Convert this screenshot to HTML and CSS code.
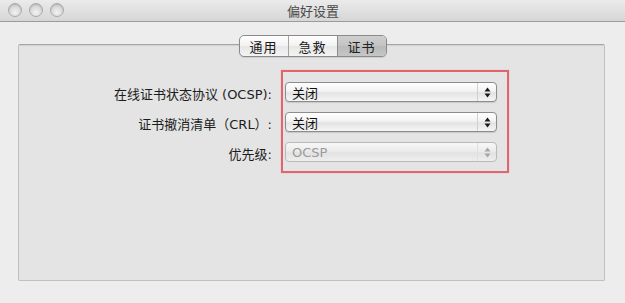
FILE: index.html
```html
<!DOCTYPE html>
<html lang="zh-CN">
<head>
<meta charset="utf-8">
<title>偏好设置</title>
<link rel="stylesheet" href="styles.css">
</head>
<body>
<div class="window">
  <div class="titlebar">
    <div class="lights">
      <span class="light"></span>
      <span class="light"></span>
      <span class="light"></span>
    </div>
    <div class="title">偏好设置</div>
  </div>
  <div class="content">
    <div class="tabs-row">
      <div class="segmented">
        <div class="seg">通用</div>
        <div class="seg">急救</div>
        <div class="seg selected">证书</div>
      </div>
    </div>
    <div class="groupbox">
      <div class="form">
        <div class="labels">
          <div class="label">在线证书状态协议 (OCSP):</div>
          <div class="label">证书撤消清单（CRL）:</div>
          <div class="label">优先级:</div>
        </div>
        <div class="highlight">
          <div class="popup">
            <span class="popup-text">关闭</span>
            <span class="popup-arrows"><svg width="7" height="11" viewBox="0 0 7 11"><path d="M3.5 0.5 L6.5 4.5 L0.5 4.5 Z" /><path d="M0.5 6.5 L6.5 6.5 L3.5 10.5 Z" /></svg></span>
          </div>
          <div class="popup">
            <span class="popup-text">关闭</span>
            <span class="popup-arrows"><svg width="7" height="11" viewBox="0 0 7 11"><path d="M3.5 0.5 L6.5 4.5 L0.5 4.5 Z" /><path d="M0.5 6.5 L6.5 6.5 L3.5 10.5 Z" /></svg></span>
          </div>
          <div class="popup disabled">
            <span class="popup-text">OCSP</span>
            <span class="popup-arrows"><svg width="7" height="11" viewBox="0 0 7 11"><path d="M3.5 0.5 L6.5 4.5 L0.5 4.5 Z" /><path d="M0.5 6.5 L6.5 6.5 L3.5 10.5 Z" /></svg></span>
          </div>
        </div>
      </div>
    </div>
  </div>
</div>
</body>
</html>
```

FILE: styles.css
```css
* { box-sizing: border-box; }
html, body {
  margin: 0;
  padding: 0;
  width: 625px;
  height: 303px;
  overflow: hidden;
  background: #ededed;
  font-family: "DejaVu Sans", "Noto Sans CJK SC", sans-serif;
  font-size: 13px;
  color: #1a1a1a;
}
.window {
  width: 625px;
  height: 303px;
  display: flex;
  flex-direction: column;
  background: #ededed;
}
.titlebar {
  height: 22px;
  flex: none;
  display: flex;
  align-items: center;
  position: relative;
  background: linear-gradient(#ebebeb, #d6d6d6);
  border-bottom: 1px solid #9c9c9c;
}
.lights {
  display: flex;
  gap: 7px;
  padding-left: 8px;
  padding-bottom: 1px;
}
.light {
  width: 14px;
  height: 14px;
  border-radius: 50%;
  border: 1px solid #a9a9a9;
  background: radial-gradient(circle at 50% 70%, #f2f2f2 0%, #d9d9d9 55%, #c4c4c4 100%);
  box-shadow: inset 0 1px 1px rgba(0,0,0,0.12);
}
.title {
  position: absolute;
  left: 0;
  right: 0;
  top: 0;
  bottom: 0;
  display: flex;
  align-items: center;
  justify-content: center;
  color: #4a4a4a;
  font-size: 13px;
  font-family: "Noto Sans CJK SC", sans-serif;
  padding-left: 1px;
  padding-bottom: 1px;
}
.content {
  display: flex;
  flex-direction: column;
  padding-top: 13px;
}
.tabs-row {
  display: flex;
  justify-content: center;
  position: relative;
  z-index: 2;
}
.segmented {
  display: flex;
  height: 22px;
  border: 1px solid #8a8a8a;
  border-radius: 5px;
  overflow: hidden;
  background: linear-gradient(#ffffff, #f1f1f1 50%, #e6e6e6 51%, #f4f4f4);
  box-shadow: 0 1px 1px rgba(0,0,0,0.1);
}
.seg {
  width: 49px;
  display: flex;
  align-items: center;
  justify-content: center;
  font-family: "Noto Sans CJK SC", sans-serif;
  font-size: 13px;
  color: #1a1a1a;
  border-left: 1px solid #a3a3a3;
  letter-spacing: 1px;
}
.seg:first-child {
  border-left: none;
  width: 48px;
}
.seg.selected {
  background: linear-gradient(#cfcfcf, #c3c3c3 50%, #b9b9b9 51%, #c6c6c6);
  border-left-color: #8c8c8c;
  color: #222;
}
.groupbox {
  margin: -13px 20px 0 18px;
  height: 237px;
  background: #e4e4e4;
  border: 1px solid #c0c0c0;
  border-top-color: #a4a4a4;
  border-radius: 2px;
  padding-top: 25px;
  box-shadow: inset 0 1px 1px rgba(0,0,0,0.08);
}
.form {
  display: flex;
  align-items: flex-start;
}
.labels {
  width: 253px;
  display: flex;
  flex-direction: column;
  gap: 10px;
  padding-top: 13px;
  margin-right: 9px;
}
.label {
  height: 20px;
  display: flex;
  align-items: center;
  justify-content: flex-end;
  white-space: nowrap;
  color: #1c1c1c;
}
.highlight {
  width: 228px;
  border: 2px solid #e2646c;
  padding: 10px 12px 9px 2px;
  display: flex;
  flex-direction: column;
  gap: 10px;
  box-shadow: 0 0 1px rgba(226,100,108,0.5);
}
.popup {
  height: 20px;
  width: 212px;
  display: flex;
  align-items: center;
  border: 1px solid #8c8c8c;
  border-radius: 4px;
  background: linear-gradient(#ffffff, #f3f3f3 45%, #e3e3e3 55%, #f5f5f5);
  box-shadow: 0 1px 1px rgba(0,0,0,0.12);
}
.popup-text {
  flex: 1;
  padding-left: 6px;
  color: #111;
  font-size: 13px;
}
.popup-arrows {
  width: 19px;
  height: 100%;
  border-left: 1px solid #d0d0d0;
  display: flex;
  align-items: center;
  justify-content: center;
}
.popup-arrows svg path { fill: #1a1a1a; }
.popup.disabled {
  border-color: #b9b9b9;
  background: linear-gradient(#f7f7f7, #ececec 45%, #e2e2e2 55%, #eeeeee);
  box-shadow: none;
}
.popup.disabled .popup-text { color: #9a9a9a; }
.popup.disabled .popup-arrows { border-left-color: #e0e0e0; }
.popup.disabled .popup-arrows svg path { fill: #a6a6a6; }
```
